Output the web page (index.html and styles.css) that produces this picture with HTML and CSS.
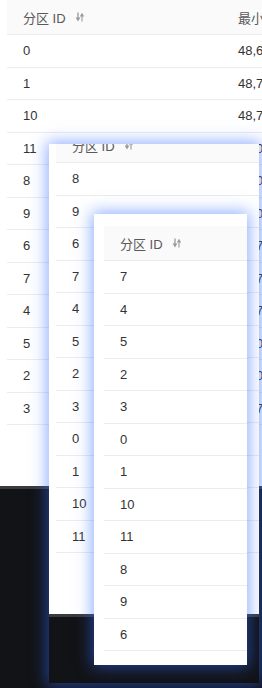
FILE: index.html
```html
<!DOCTYPE html>
<html lang="zh-CN">
<head>
<meta charset="utf-8">
<title>分区列表</title>
<link rel="stylesheet" href="styles.css">
</head>
<body>
<div class="screen">

  <!-- main page -->
  <div class="page">
    <div class="sheet">
      <div class="grid">
        <div class="row head">
          <div class="c1">分区 ID<svg class="sort" viewBox="0 0 10 10" width="10" height="10"><path d="M3 0.5V7" stroke="currentColor" stroke-width="1.3"/><path d="M0.6 5.6H5.4L3 9.4Z" fill="currentColor"/><path d="M7 9.5V3" stroke="currentColor" stroke-width="1.1"/><path d="M4.8 4.4H9.2L7 0.8Z" fill="currentColor"/></svg></div>
          <div class="c2">最小值</div>
        </div>
        <div class="row"><div class="c1">0</div><div class="c2">48,612</div></div>
        <div class="row"><div class="c1">1</div><div class="c2">48,734</div></div>
        <div class="row"><div class="c1">10</div><div class="c2">48,752</div></div>
        <div class="row"><div class="c1">11</div><div class="c2">48,006</div></div>
        <div class="row"><div class="c1">8</div><div class="c2">49,021</div></div>
        <div class="row"><div class="c1">9</div><div class="c2">49,058</div></div>
        <div class="row"><div class="c1">6</div><div class="c2">48,771</div></div>
        <div class="row"><div class="c1">7</div><div class="c2">48,790</div></div>
        <div class="row"><div class="c1">4</div><div class="c2">48,715</div></div>
        <div class="row"><div class="c1">5</div><div class="c2">49,083</div></div>
        <div class="row"><div class="c1">2</div><div class="c2">49,040</div></div>
        <div class="row"><div class="c1">3</div><div class="c2">48,728</div></div>
      </div>
    </div>
    <div class="dock"></div>
  </div>

  <!-- first floating window: same page, scrolled -->
  <div class="win win-a">
    <div class="page scrolled">
      <div class="sheet">
        <div class="grid">
          <div class="row head">
            <div class="c1">分区 ID<svg class="sort" viewBox="0 0 10 10" width="10" height="10"><path d="M3 0.5V7" stroke="currentColor" stroke-width="1.3"/><path d="M0.6 5.6H5.4L3 9.4Z" fill="currentColor"/><path d="M7 9.5V3" stroke="currentColor" stroke-width="1.1"/><path d="M4.8 4.4H9.2L7 0.8Z" fill="currentColor"/></svg></div>
            <div class="c2">最小值</div>
          </div>
          <div class="row"><div class="c1">8</div><div class="c2">49,021</div></div>
          <div class="row"><div class="c1">9</div><div class="c2">49,058</div></div>
          <div class="row"><div class="c1">6</div><div class="c2">48,771</div></div>
          <div class="row"><div class="c1">7</div><div class="c2">48,790</div></div>
          <div class="row"><div class="c1">4</div><div class="c2">48,715</div></div>
          <div class="row"><div class="c1">5</div><div class="c2">49,083</div></div>
          <div class="row"><div class="c1">2</div><div class="c2">49,040</div></div>
          <div class="row"><div class="c1">3</div><div class="c2">48,728</div></div>
          <div class="row"><div class="c1">0</div><div class="c2">48,612</div></div>
          <div class="row"><div class="c1">1</div><div class="c2">48,734</div></div>
          <div class="row"><div class="c1">10</div><div class="c2">48,752</div></div>
          <div class="row"><div class="c1">11</div><div class="c2">48,006</div></div>
        </div>
      </div>
      <div class="dock"></div>
    </div>
  </div>

  <!-- second floating window -->
  <div class="win win-b">
    <div class="grid">
      <div class="row head">
        <div class="c1">分区 ID<svg class="sort" viewBox="0 0 10 10" width="10" height="10"><path d="M3 0.5V7" stroke="currentColor" stroke-width="1.3"/><path d="M0.6 5.6H5.4L3 9.4Z" fill="currentColor"/><path d="M7 9.5V3" stroke="currentColor" stroke-width="1.1"/><path d="M4.8 4.4H9.2L7 0.8Z" fill="currentColor"/></svg></div>
        <div class="c2">最小值</div>
      </div>
      <div class="row"><div class="c1">7</div><div class="c2">48,790</div></div>
      <div class="row"><div class="c1">4</div><div class="c2">48,715</div></div>
      <div class="row"><div class="c1">5</div><div class="c2">49,083</div></div>
      <div class="row"><div class="c1">2</div><div class="c2">49,040</div></div>
      <div class="row"><div class="c1">3</div><div class="c2">48,728</div></div>
      <div class="row"><div class="c1">0</div><div class="c2">48,612</div></div>
      <div class="row"><div class="c1">1</div><div class="c2">48,734</div></div>
      <div class="row"><div class="c1">10</div><div class="c2">48,752</div></div>
      <div class="row"><div class="c1">11</div><div class="c2">48,006</div></div>
      <div class="row"><div class="c1">8</div><div class="c2">49,021</div></div>
      <div class="row"><div class="c1">9</div><div class="c2">49,058</div></div>
      <div class="row"><div class="c1">6</div><div class="c2">48,771</div></div>
    </div>
  </div>

</div>
</body>
</html>
```

FILE: styles.css
```css
* {
  box-sizing: border-box;
}

body {
  margin: 0;
  width: 262px;
  height: 688px;
  overflow: hidden;
  font-family: "Liberation Sans", "Noto Sans CJK SC", sans-serif;
  font-size: 13px;
  color: #333;
  background: #fff;
}

.screen {
  position: relative;
  width: 262px;
  height: 688px;
  overflow: hidden;
}

/* page: white sheet with the table, dark dock underneath */
.page {
  width: 262px;
  height: 688px;
  display: flex;
  flex-direction: column;
  background: #fff;
}

.sheet {
  flex: none;
  height: 486px;
  padding-left: 7px;
  overflow: hidden;
}

.dock {
  flex: 1;
  background: #121316;
  border-top: 3px solid #3b3b3d;
}

/* table */
.grid {
  width: 430px;
}

.row {
  display: flex;
  align-items: center;
  height: 32.5px;
  border-bottom: 1px solid #ececec;
  white-space: nowrap;
}

.row.head {
  height: 35px;
  background: #fafafa;
  color: #595959;
}

.c1 {
  flex: none;
  width: 215px;
  padding-left: 16px;
  display: flex;
  align-items: center;
}

.c2 {
  padding-left: 16px;
}

.sort {
  margin-left: 9px;
  color: #9a9a9a;
}

/* floating windows */
.win {
  position: absolute;
  overflow: hidden;
  background: #fff;
  box-shadow: 0 0 15px 2px rgba(50, 105, 255, 0.55);
}

.win-a {
  left: 49px;
  top: 144px;
  width: 210px;
  height: 539px;
}

.win-a .scrolled {
  margin-top: -16px;
}

.win-b {
  left: 94px;
  top: 214px;
  width: 153px;
  height: 451px;
  padding: 12px 0 0 10px;
}
```
